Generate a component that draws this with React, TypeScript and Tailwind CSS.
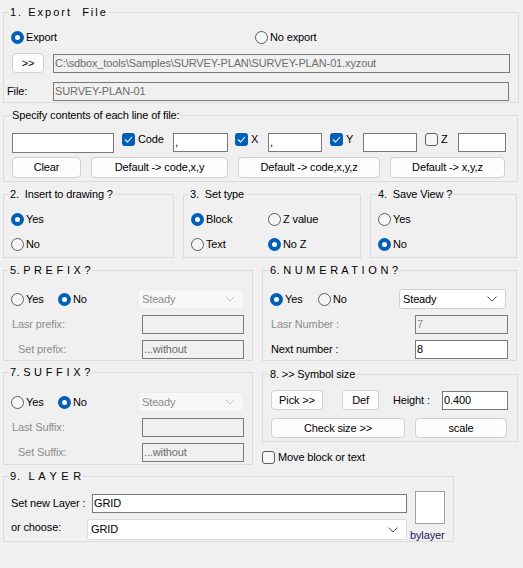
import React from "react";

function Radio({ on, label, className = "" }: { on?: boolean; label: string; className?: string }) {
  return (
    <div className={`flex h-[13px] items-center ${className}`}>
      {on ? (
        <span className="flex h-[13px] w-[13px] shrink-0 items-center justify-center rounded-full bg-[#005fb8]">
          <span className="h-[5px] w-[5px] rounded-full bg-white" />
        </span>
      ) : (
        <span className="h-[13px] w-[13px] shrink-0 rounded-full border border-[#5d5d5d] bg-[#f6f6f6]" />
      )}
      <span className="ml-[2px] whitespace-nowrap">{label}</span>
    </div>
  );
}

function Check({ on, label, className = "" }: { on?: boolean; label: string; className?: string }) {
  return (
    <div className={`flex h-[13px] items-center ${className}`}>
      {on ? (
        <span className="flex h-[13px] w-[13px] shrink-0 items-center justify-center rounded-[3px] bg-[#005fb8]">
          <svg width="9" height="7" viewBox="0 0 9 7">
            <path d="M1 3.5 L3.5 6 L8 1" fill="none" stroke="white" strokeWidth="1.1" />
          </svg>
        </span>
      ) : (
        <span className="h-[13px] w-[13px] shrink-0 rounded-[3px] border border-[#5d5d5d] bg-[#f6f6f6]" />
      )}
      <span className="ml-[3px] whitespace-nowrap">{label}</span>
    </div>
  );
}

function TextBox({ value = "", off, className = "" }: { value?: string; off?: boolean; className?: string }) {
  return (
    <div
      className={`flex h-[19px] items-center overflow-hidden whitespace-nowrap border border-[#7a7a7a] pl-[1px] ${
        off ? "bg-[#f0f0f0] text-[#6d6d6d]" : "bg-white text-black"
      } ${className}`}
    >
      {value}
    </div>
  );
}

function Btn({ label, className = "" }: { label: string; className?: string }) {
  return (
    <div
      className={`flex items-center justify-center whitespace-nowrap rounded-[4px] border border-[#d0d0d0] bg-[#fdfdfd] ${className}`}
    >
      {label}
    </div>
  );
}

function Chevron({ color }: { color: string }) {
  return (
    <svg width="10" height="6" viewBox="0 0 10 6">
      <path d="M0.5 0.5 L5 5 L9.5 0.5" fill="none" stroke={color} strokeWidth="1" />
    </svg>
  );
}

function Combo({ value, off, className = "" }: { value: string; off?: boolean; className?: string }) {
  return (
    <div
      className={`flex items-center justify-between rounded-[3px] border pl-[3px] pr-[8px] ${
        off ? "border-[#ececec] bg-[#f7f7f7] text-[#8d8d8d]" : "border-[#d0d0d0] bg-white text-black"
      } ${className}`}
    >
      <span>{value}</span>
      <Chevron color={off ? "#c4c4c4" : "#555555"} />
    </div>
  );
}

function Group({
  title,
  titleClass,
  className = "",
  children,
}: {
  title: string;
  titleClass: string;
  className?: string;
  children?: React.ReactNode;
}) {
  return (
    <div className={`relative shrink-0 border border-[#dcdcdc] ${className}`}>
      <span className={`absolute -top-[7px] whitespace-pre bg-[#f0f0f0] px-[1px] leading-[13px] ${titleClass}`}>
        {title}
      </span>
      {children}
    </div>
  );
}

export default function App() {
  return (
    <div className="h-[568px] w-[523px] overflow-hidden bg-[#f0f0f0] pl-[3px] pt-[12px] font-['Liberation_Sans',Arial,sans-serif] text-[11px] leading-[13px] tracking-[-0.13px] text-black">
      {/* 1. Export File */}
      <Group title="1. Export  File" titleClass="left-[5px] tracking-[2px]" className="h-[91px] w-[516px]">
        <div className="mt-[18px] flex pl-[7px]">
          <Radio on label="Export" className="w-[244px]" />
          <Radio label="No export" />
        </div>
        <div className="mt-[9px] flex items-start pl-[8px]">
          <Btn label=">>" className="h-[20px] w-[32px]" />
          <TextBox
            off
            value="C:\sdbox_tools\Samples\SURVEY-PLAN\SURVEY-PLAN-01.xyzout"
            className="ml-[9px] mt-[1px] w-[457px]"
          />
        </div>
        <div className="mt-[9px] flex items-center pl-[3px]">
          <span className="w-[46px]">File:</span>
          <TextBox off value="SURVEY-PLAN-01" className="w-[456px]" />
        </div>
      </Group>

      {/* contents of line */}
      <Group
        title="Specify contents of each line of file:"
        titleClass="left-[7px]"
        className="mt-[12px] h-[67px] w-[515px]"
      >
        <div className="mt-[17px] flex h-[20px] items-start">
          <TextBox className="ml-[8px] h-[20px] w-[102px]" />
          <Check on label="Code" className="ml-[8px] w-[51px]" />
          <TextBox value="," className="w-[55px]" />
          <Check on label="X" className="ml-[7px] w-[33px]" />
          <TextBox value="," className="w-[54px]" />
          <Check on label="Y" className="ml-[8px] w-[33px]" />
          <TextBox className="w-[54px]" />
          <Check label="Z" className="ml-[8px] w-[33px]" />
          <TextBox className="w-[48px]" />
        </div>
        <div className="mt-[4px] flex h-[21px] pl-[8px]">
          <Btn label="Clear" className="w-[69px]" />
          <Btn label="Default -> code,x,y" className="ml-[10px] w-[137px]" />
          <Btn label="Default -> code,x,y,z" className="ml-[10px] w-[142px]" />
          <Btn label="Default -> x,y,z" className="ml-[10px] w-[115px]" />
        </div>
      </Group>

      {/* 2 3 4 */}
      <div className="mt-[12px] flex">
        <Group title="2.  Insert to drawing ?" titleClass="left-[5px]" className="h-[64px] w-[171px]">
          <div className="flex flex-col pl-[7px] pt-[18px]">
            <Radio on label="Yes" />
            <Radio label="No" className="mt-[12px]" />
          </div>
        </Group>
        <Group title="3.  Set type" titleClass="left-[5px]" className="ml-[9px] h-[64px] w-[178px]">
          <div className="flex pl-[7px] pt-[18px]">
            <div className="flex w-[77px] flex-col">
              <Radio on label="Block" />
              <Radio label="Text" className="mt-[12px]" />
            </div>
            <div className="flex flex-col">
              <Radio label="Z value" />
              <Radio on label="No Z" className="mt-[12px]" />
            </div>
          </div>
        </Group>
        <Group title="4.  Save View ?" titleClass="left-[6px]" className="ml-[9px] h-[64px] w-[147px]">
          <div className="flex flex-col pl-[7px] pt-[18px]">
            <Radio label="Yes" />
            <Radio on label="No" className="mt-[12px]" />
          </div>
        </Group>
      </div>

      {/* 5 6 */}
      <div className="mt-[12px] flex">
        <Group title="5. P R E F I X ?" titleClass="left-[5px] tracking-[0.3px]" className="h-[91px] w-[250px]">
          <div className="mt-[18px] flex h-[20px] items-center pl-[7px]">
            <Radio label="Yes" className="w-[47px]" />
            <Radio on label="No" className="w-[80px]" />
            <Combo off value="Steady" className="h-[20px] w-[106px]" />
          </div>
          <div className="mt-[6px] flex items-center pl-[8px] text-[#8d8d8d]">
            <span className="w-[130px]">Lasr prefix:</span>
            <TextBox off className="w-[102px]" />
          </div>
          <div className="mt-[6px] flex items-center pl-[14px] text-[#8d8d8d]">
            <span className="w-[124px]">Set prefix:</span>
            <TextBox off value="...without" className="w-[102px]" />
          </div>
        </Group>
        <Group
          title="6. N U M E R A T I O N ?"
          titleClass="left-[6px] tracking-[0.3px]"
          className="ml-[9px] h-[91px] w-[255px]"
        >
          <div className="mt-[18px] flex h-[20px] items-center pl-[7px]">
            <Radio on label="Yes" className="w-[48px]" />
            <Radio label="No" className="w-[81px]" />
            <Combo value="Steady" className="h-[20px] w-[107px]" />
          </div>
          <div className="mt-[6px] flex items-center pl-[8px]">
            <span className="w-[144px] text-[#8d8d8d]">Lasr Number :</span>
            <TextBox off value="7" className="w-[93px] text-[#8d8d8d]" />
          </div>
          <div className="mt-[6px] flex items-center pl-[8px]">
            <span className="w-[144px]">Next number :</span>
            <TextBox value="8" className="w-[93px]" />
          </div>
        </Group>
      </div>

      {/* 7 8 */}
      <div className="mt-[11px] flex items-start">
        <Group title="7. S U F F I X ?" titleClass="left-[5px] tracking-[0.3px]" className="h-[93px] w-[250px]">
          <div className="mt-[19px] flex h-[20px] items-center pl-[7px]">
            <Radio label="Yes" className="w-[47px]" />
            <Radio on label="No" className="w-[80px]" />
            <Combo off value="Steady" className="h-[20px] w-[106px]" />
          </div>
          <div className="mt-[6px] flex items-center pl-[8px] text-[#8d8d8d]">
            <span className="w-[130px]">Last Suffix:</span>
            <TextBox off className="w-[102px]" />
          </div>
          <div className="mt-[6px] flex items-center pl-[14px] text-[#8d8d8d]">
            <span className="w-[124px]">Set Suffix:</span>
            <TextBox off value="...without" className="w-[102px]" />
          </div>
        </Group>
        <div className="ml-[9px] mt-[2px] flex flex-col">
          <Group title="8. >> Symbol size" titleClass="left-[6px]" className="h-[68px] w-[256px]">
            <div className="mt-[15px] flex h-[20px] items-center pl-[8px]">
              <Btn label="Pick >>" className="h-[20px] w-[52px]" />
              <Btn label="Def" className="ml-[19px] h-[20px] w-[37px]" />
              <span className="ml-[14px] w-[49px]">Height :</span>
              <TextBox value="0.400" className="h-[18px] w-[66px]" />
            </div>
            <div className="mt-[8px] flex h-[20px] pl-[8px]">
              <Btn label="Check size >>" className="w-[134px]" />
              <Btn label="scale" className="ml-[10px] w-[92px]" />
            </div>
          </Group>
          <Check label="Move block or text" className="mt-[9px]" />
        </div>
      </div>

      {/* 9 layer */}
      <Group
        title="9.  L A Y E R"
        titleClass="left-[5px] tracking-[0.8px]"
        className="mt-[11px] h-[66px] w-[451px]"
      >
        <div className="flex">
          <div className="flex flex-col">
            <div className="mt-[17px] flex items-center pl-[7px]">
              <span className="w-[81px] whitespace-nowrap">Set new Layer :</span>
              <TextBox value="GRID" className="w-[315px]" />
            </div>
            <div className="mt-[6px] flex items-start pl-[7px]">
              <span className="mt-[2px] w-[76px]">or choose:</span>
              <Combo value="GRID" className="h-[21px] w-[320px] border-[#dadada] bg-[#fbfbfb]" />
            </div>
          </div>
          <div className="ml-[8px] flex w-[30px] flex-col">
            <div className="mt-[14px] h-[33px] w-[30px] border border-[#a0a0a0] bg-white" />
            <span className="-ml-[5px] mt-[5px] whitespace-nowrap text-[#1a1a5e]">bylayer</span>
          </div>
        </div>
      </Group>
    </div>
  );
}
